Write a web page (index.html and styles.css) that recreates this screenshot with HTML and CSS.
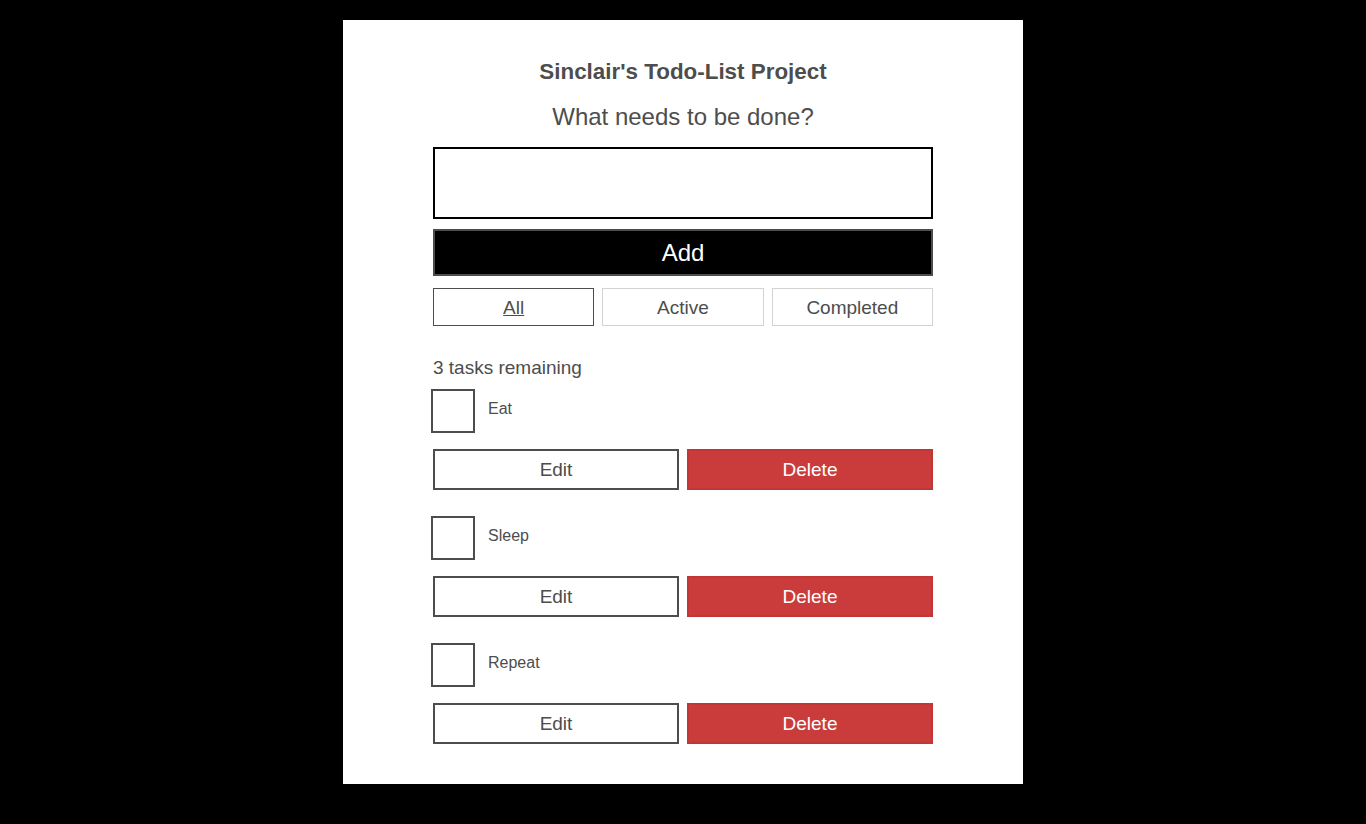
FILE: index.html
```html
<!DOCTYPE html>
<html lang="en">

<head>
    <meta charset="UTF-8">
    <meta name="viewport" content="width=device-width, initial-scale=1.0">
    <title>Sinclair's Todo-List Project</title>
    <link rel="stylesheet" href="styles.css">
</head>

<body>
    <div class="todoapp">
        <h1>Sinclair's Todo-List Project</h1>

        <form class="new-todo">
            <h2 class="label-wrapper">
                <label for="new-todo-input">What needs to be done?</label>
            </h2>
            <input type="text" id="new-todo-input" class="input-lg" autocomplete="off">
            <button type="submit" class="btn btn-primary btn-lg">Add</button>
        </form>

        <!-- Filter buttons -->
        <div class="filters">
            <button type="button" class="btn toggle-btn pressed"><span>All</span></button>
            <button type="button" class="btn toggle-btn"><span>Active</span></button>
            <button type="button" class="btn toggle-btn"><span>Completed</span></button>
        </div>

        <h2 class="list-heading">3 tasks remaining</h2>

        <ul class="todo-list">
            <li class="todo">
                <div class="todo-check">
                    <input type="checkbox" id="todo-0">
                    <label for="todo-0" class="todo-label">Eat</label>
                </div>
                <div class="btn-group">
                    <button type="button" class="btn">Edit</button>
                    <button type="button" class="btn btn-danger">Delete</button>
                </div>
            </li>
            <li class="todo">
                <div class="todo-check">
                    <input type="checkbox" id="todo-1">
                    <label for="todo-1" class="todo-label">Sleep</label>
                </div>
                <div class="btn-group">
                    <button type="button" class="btn">Edit</button>
                    <button type="button" class="btn btn-danger">Delete</button>
                </div>
            </li>
            <li class="todo">
                <div class="todo-check">
                    <input type="checkbox" id="todo-2">
                    <label for="todo-2" class="todo-label">Repeat</label>
                </div>
                <div class="btn-group">
                    <button type="button" class="btn">Edit</button>
                    <button type="button" class="btn btn-danger">Delete</button>
                </div>
            </li>
        </ul>
    </div>
</body>

</html>
```

FILE: styles.css
```css
body {
    margin: 0;
    background-color: #000;
    color: #4d4d4d;
    font-family: "Liberation Sans", Arial, sans-serif;
    font-size: 19px;
}

.todoapp {
    width: 600px;
    margin: 20px auto 0;
    padding: 40px;
    background: #fff;
}

.todoapp > * {
    max-width: 500px;
    margin-left: auto;
    margin-right: auto;
}

h1 {
    margin: 0 auto 13px;
    font-size: 22.4px;
    line-height: 24px;
    text-align: center;
}

.label-wrapper {
    margin: 0 0 10px;
    padding: 8px 0;
    font-size: 24px;
    font-weight: normal;
    line-height: 24px;
    text-align: center;
}

.input-lg {
    display: block;
    box-sizing: border-box;
    width: 100%;
    height: 72px;
    margin: 0;
    padding: 20px;
    border: 2px solid #000;
    font-family: inherit;
    font-size: 19px;
}

.btn {
    box-sizing: border-box;
    margin: 0;
    padding: 0 10px;
    border: 2px solid #4d4d4d;
    background: #fff;
    color: #4d4d4d;
    font-family: inherit;
    font-size: 19px;
    cursor: pointer;
}

.btn-lg {
    display: block;
    width: 100%;
    height: 47px;
    margin-top: 10px;
    font-size: 24px;
}

.btn-primary {
    background-color: #000;
    color: #fff;
}

.filters {
    display: flex;
    gap: 8px;
    margin-top: 12px;
}

.toggle-btn {
    flex: 1;
    height: 38px;
    padding-top: 2px;
    border-width: 1px;
    border-color: #d3d3d3;
}

.toggle-btn.pressed {
    border-color: #4d4d4d;
}

.toggle-btn.pressed span {
    text-decoration: underline;
}

.list-heading {
    margin-top: 30px;
    margin-bottom: 0;
    font-size: 19px;
    font-weight: normal;
    line-height: 24px;
}

.todo-list {
    display: flex;
    flex-direction: column;
    gap: 26px;
    margin-top: 9px;
    margin-bottom: 0;
    padding: 0;
    list-style: none;
}

.todo-check {
    display: flex;
    align-items: flex-start;
    height: 44px;
    margin-left: -2px;
}

.todo-check input[type="checkbox"] {
    appearance: none;
    box-sizing: border-box;
    width: 44px;
    height: 44px;
    margin: 0;
    border: 2px solid #4d4d4d;
    background: #fff;
}

.todo-label {
    margin-left: 13px;
    padding-top: 11px;
    font-size: 16px;
    line-height: 18px;
}

.btn-group {
    display: flex;
    gap: 8px;
    margin-top: 16px;
}

.btn-group .btn {
    flex: 1;
    height: 41px;
}

.btn-danger {
    background-color: #ca3c3c;
    border-color: #c23636;
    color: #fff;
}
```
